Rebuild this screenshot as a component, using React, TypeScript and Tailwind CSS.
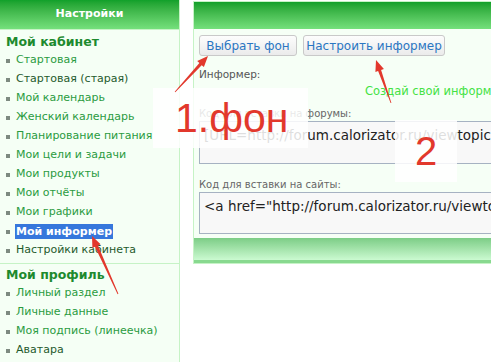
const font = { fontFamily: '"DejaVu Sans", Verdana, sans-serif' };

type Item = { label: string; dark?: boolean; active?: boolean };

const cabinet: Item[] = [
  { label: 'Стартовая' },
  { label: 'Стартовая (старая)', dark: true },
  { label: 'Мой календарь' },
  { label: 'Женский календарь' },
  { label: 'Планирование питания' },
  { label: 'Мои цели и задачи' },
  { label: 'Мои продукты' },
  { label: 'Мои отчёты' },
  { label: 'Мои графики' },
  { label: 'Мой информер', active: true },
  { label: 'Настройки кабинета', dark: true },
];

const profile: Item[] = [
  { label: 'Личный раздел' },
  { label: 'Личные данные' },
  { label: 'Моя подпись (линеечка)' },
  { label: 'Аватара', dark: true },
];

const MenuItem = ({ item }: { item: Item }) => (
  <li className="flex items-center h-[19px] pl-[6px]">
    <span className="w-[4px] h-[4px] bg-[#7d8a80] mr-[6px]" />
    {item.active ? (
      <span className="bg-[#3677dc] text-white font-bold leading-[15px] px-[1px] -ml-[1px]">{item.label}</span>
    ) : (
      <span className={item.dark ? 'text-[#1f5a2c]' : 'text-[#2a9b3f]'}>{item.label}</span>
    )}
  </li>
);

// tapered red arrow from tail to tip
const Arrow = ({ tip, tail }: { tip: [number, number]; tail: [number, number] }) => {
  const [tx, ty] = tip;
  const [bx, by] = tail;
  const len = Math.hypot(tx - bx, ty - by);
  const ux = (tx - bx) / len;
  const uy = (ty - by) / len;
  const nx = -uy;
  const ny = ux;
  const head = 11;
  const hx = tx - ux * head;
  const hy = ty - uy * head;
  const p = (x: number, y: number) => `${x.toFixed(1)},${y.toFixed(1)}`;
  const pts = [
    p(bx + nx * 0.4, by + ny * 0.4),
    p(hx + nx * 1.6, hy + ny * 1.6),
    p(hx + nx * 4.5, hy + ny * 4.5),
    p(tx, ty),
    p(hx - nx * 4.5, hy - ny * 4.5),
    p(hx - nx * 1.6, hy - ny * 1.6),
    p(bx - nx * 0.4, by - ny * 0.4),
  ].join(' ');
  return <polygon points={pts} fill="#e2382c" />;
};

const App = () => {
  return (
    <div className="relative w-[491px] h-[362px] overflow-hidden bg-white" style={font}>
      <div className="flex items-start">
        {/* sidebar */}
        <aside className="w-[180px] h-[362px] shrink-0 bg-[#f5fff5] border-r border-[#c6f3c6]">
          <div className="h-[30px] flex items-center justify-center bg-gradient-to-b from-[#10a02a] to-[#74e07c] border-b border-[#c6f3c6] text-white font-bold text-[11px]">
            Настройки
          </div>
          <div className="pt-[3px] pb-[3px] border-b border-[#c6f3c6]">
            <h3 className="h-[18px] leading-[18px] pl-[6px] text-[12.5px] font-bold text-[#1d8a2e]">Мой кабинет</h3>
            <ul className="text-[11px]">
              {cabinet.map((item) => (
                <MenuItem key={item.label} item={item} />
              ))}
            </ul>
          </div>
          <div className="pt-[2px]">
            <h3 className="h-[18px] leading-[18px] pl-[6px] text-[12.5px] font-bold text-[#1d8a2e]">Мой профиль</h3>
            <ul className="text-[11px]">
              {profile.map((item) => (
                <MenuItem key={item.label} item={item} />
              ))}
            </ul>
          </div>
        </aside>

        {/* informer panel */}
        <section className="ml-[13px] mt-[1px] w-[400px] shrink-0 border border-[#c6f3c6] bg-[#f6fff6]">
          <div className="h-[27px] bg-gradient-to-b from-[#10a02a] to-[#74e07c]" />
          <div className="px-[5px] pt-[6px] pb-[4px]">
            <div className="flex gap-[6px]">
              <button className="h-[21px] w-[98px] rounded-[3px] border border-[#c9c9c9] bg-gradient-to-b from-[#fdfdfd] to-[#ebebeb] text-[12px] text-[#2b76c2]">
                Выбрать фон
              </button>
              <button className="h-[21px] w-[142px] rounded-[3px] border border-[#c9c9c9] bg-gradient-to-b from-[#fdfdfd] to-[#ebebeb] text-[12px] text-[#2b76c2]">
                Настроить информер
              </button>
            </div>
            <div className="mt-[11px] h-[14px] leading-[14px] text-[10.5px] text-[#555]">Информер:</div>
            <div className="h-[26px] pl-[166px] pt-[2px] whitespace-nowrap text-[11.5px] text-[#44e244]">
              Создай свой информер
            </div>
            <div className="h-[13px] leading-[13px] text-[10px] text-[#666]">Код для вставки на форумы:</div>
            <div className="mt-[1px] h-[43px] border border-[#a6b2c2] bg-[#f8f8f8] pl-[4px] pt-[3px] whitespace-nowrap overflow-hidden text-[13.5px] text-[#222]">
              [URL=http://forum.calorizator.ru/viewtopic.php
            </div>
            <div className="mt-[14px] h-[13px] leading-[13px] text-[10px] text-[#666]">Код для вставки на сайты:</div>
            <div className="mt-[1px] h-[42px] border border-[#a6b2c2] bg-[#f8f8f8] pl-[4px] pt-[3px] whitespace-nowrap overflow-hidden text-[13.5px] text-[#222]">
              &lt;a href="http://forum.calorizator.ru/viewtopic.php
            </div>
          </div>
          <div className="h-[25px] bg-gradient-to-b from-[#7ccd86] to-[#cbfad1] border-b-[3px] border-[#88d98f]" />
        </section>
      </div>

      {/* annotation boxes */}
      <div className="absolute left-[153px] top-[88px] w-[155px] h-[60px] bg-white/85 flex items-center">
        <span className="pl-[22px] text-[41px] leading-none text-[#e2382c]" style={{ fontFamily: '"Liberation Sans", Arial, sans-serif' }}>
          1.фон
        </span>
      </div>
      <div className="absolute left-[395px] top-[120px] w-[62px] h-[62px] bg-white/85 flex items-center justify-center">
        <span className="text-[40px] leading-none text-[#e2382c]" style={{ fontFamily: '"Liberation Sans", Arial, sans-serif' }}>
          2
        </span>
      </div>

      <svg className="absolute inset-0 pointer-events-none" width="491" height="362">
        <Arrow tip={[208, 56]} tail={[175, 92]} />
        <Arrow tip={[376, 60]} tail={[391, 103]} />
        <Arrow tip={[92, 236]} tail={[118, 294]} />
      </svg>
    </div>
  );
};

export default App;
